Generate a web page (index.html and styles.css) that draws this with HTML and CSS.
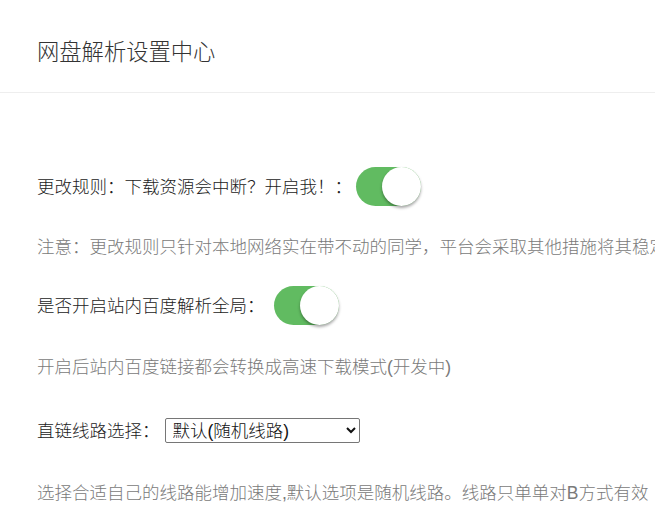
FILE: index.html
```html
<!DOCTYPE html>
<html lang="zh-CN">
<head>
<meta charset="utf-8">
<title>网盘解析设置中心</title>
<link rel="stylesheet" href="styles.css">
</head>
<body>
<header class="header">
  <h1 class="title">网盘解析设置中心</h1>
</header>
<main class="content">
  <div class="row row-first">
    <span class="label">更改规则：下载资源会中断？开启我！：</span>
    <span class="toggle"><span class="knob"></span></span>
  </div>
  <p class="note note-first">注意：更改规则只针对本地网络实在带不动的同学，平台会采取其他措施将其稳定下载速度</p>
  <div class="row row-second">
    <span class="label">是否开启站内百度解析全局：</span>
    <span class="toggle toggle-second"><span class="knob"></span></span>
  </div>
  <p class="note note-second">开启后站内百度链接都会转换成高速下载模式(开发中)</p>
  <div class="row row-third">
    <span class="label">直链线路选择：</span>
    <select class="select">
      <option>默认(随机线路)</option>
      <option>线路一</option>
      <option>线路二</option>
    </select>
  </div>
  <p class="note note-third">选择合适自己的线路能增加速度,默认选项是随机线路。线路只单单对B方式有效</p>
</main>
</body>
</html>
```
FILE: styles.css
```css
html, body {
  margin: 0;
  padding: 0;
  background: #ffffff;
  overflow: hidden;
}
body {
  width: 655px;
  height: 507px;
  font-family: "Liberation Sans", "Noto Sans CJK SC", sans-serif;
  color: #333333;
}
.header {
  padding: 38px 37px 24px;
  border-bottom: 1px solid #eeeeee;
}
.title {
  margin: 0;
  font-size: 22.3px;
  line-height: 30px;
  font-weight: 300;
  color: #333333;
}
.content {
  padding-left: 37px;
  display: flex;
  flex-direction: column;
  align-items: flex-start;
}
.row {
  display: flex;
  align-items: center;
  white-space: nowrap;
}
.label {
  font-size: 17.5px;
  line-height: 24px;
  font-weight: 300;
  color: #222222;
}
.row-first { margin-top: 74px; }
.row-second { margin-top: 27px; }
.row-third { margin-top: 39px; }
.toggle {
  display: flex;
  justify-content: flex-end;
  align-items: center;
  width: 65px;
  height: 39px;
  margin-left: 4px;
  border-radius: 20px;
  background: #61bb61;
}
.toggle-second { margin-left: 9px; }
.knob {
  width: 39px;
  height: 39px;
  border-radius: 50%;
  background: #ffffff;
  box-shadow: 0 2px 3px rgba(0, 0, 0, 0.35);
}
.note {
  margin: 0;
  font-size: 17.5px;
  line-height: 24px;
  font-weight: 300;
  color: #7a7a7a;
  white-space: nowrap;
}
.note-first { margin-top: 29px; }
.note-second { margin-top: 30px; }
.note-third { margin-top: 38px; }
.select {
  width: 195px;
  height: 25px;
  margin-left: 5px;
  padding: 0 0 0 3px;
  font-family: "Liberation Sans", "Noto Sans CJK SC", sans-serif;
  font-size: 17.5px;
  font-weight: 300;
  color: #111111;
  border: 1px solid #767676;
  border-radius: 2px;
  background: #ffffff;
}
```
